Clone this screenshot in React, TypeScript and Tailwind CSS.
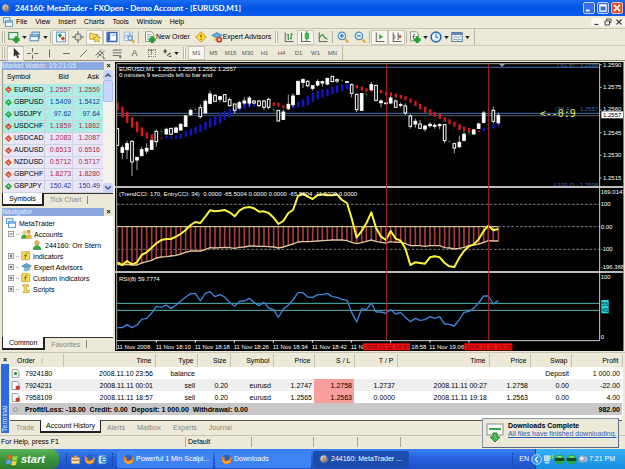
import { ReactNode, useState } from "react";
import { clsx } from "clsx";

type Trend = "up" | "down";

const menuItems = ["File", "View", "Insert", "Charts", "Tools", "Window", "Help"];
const periods = ["M1", "M5", "M15", "M30", "H1", "H4", "D1", "W1", "MN"];

const quotes: { symbol: string; bid: string; ask: string; trend: Trend; major?: boolean; blue?: boolean }[] = [
  { symbol: "EURUSD", bid: "1.2557", ask: "1.2559", trend: "down", major: true },
  { symbol: "GBPUSD", bid: "1.5409", ask: "1.5412", trend: "up", major: true, blue: true },
  { symbol: "USDJPY", bid: "97.62", ask: "97.64", trend: "up", major: true, blue: true },
  { symbol: "USDCHF", bid: "1.1859", ask: "1.1862", trend: "down", major: true },
  { symbol: "USDCAD", bid: "1.2083", ask: "1.2087", trend: "down" },
  { symbol: "AUDUSD", bid: "0.6513", ask: "0.6516", trend: "down" },
  { symbol: "NZDUSD", bid: "0.5712", ask: "0.5717", trend: "down" },
  { symbol: "GBPCHF", bid: "1.8273", ask: "1.8280", trend: "down" },
  { symbol: "GBPJPY", bid: "150.42", ask: "150.49", trend: "up", blue: true },
];

const orderColumns = [
  { title: "Order", width: "w-[53px]" },
  { title: "Time", width: "w-[92px]" },
  { title: "Type", width: "w-[42px]" },
  { title: "Size", width: "w-[33px]" },
  { title: "Symbol", width: "w-[43px]" },
  { title: "Price", width: "w-[41px]" },
  { title: "S / L", width: "w-[40px]" },
  { title: "T / P", width: "w-[43px]" },
  { title: "Time", width: "w-[92px]" },
  { title: "Price", width: "w-[41px]" },
  { title: "Swap", width: "w-[41px]" },
  { title: "Profit", width: "w-[51px]" },
];

const orders = [
  ["7924180", "2008.11.10 23:56", "balance", "", "", "", "", "", "", "", "Deposit", "1 000.00"],
  ["7924231", "2008.11.11 00:01", "sell", "0.20", "eurusd", "1.2747", "1.2758", "1.2737", "2008.11.11 00:27", "1.2758", "0.00", "-22.00"],
  ["7958109", "2008.11.11 18:57", "sell", "0.20", "eurusd", "1.2565", "1.2563", "0.0000", "2008.11.11 19:18", "1.2563", "0.00", "4.00"],
];

const terminalTabs = ["Trade", "Account History", "Alerts", "Mailbox", "Experts", "Journal"];

/* ---------- chart data, one entry per bar ---------- */

// [kind, high, low, body top, body bottom]: w = filled, h = hollow, g = doji
type Candle = [string, number, number, number, number];
const candles: Candle[] = [
  ["h", 205, 257, 205, 257], ["w", 255, 298, 262, 278], ["w", 242, 297, 250, 270], ["h", 240, 348, 243, 307],
  ["w", 291, 330, 291, 301], ["w", 260, 288, 268, 288], ["w", 250, 282, 264, 274], ["w", 241, 269, 241, 269],
  ["h", 208, 260, 213, 246], ["g", 205, 225, 215, 217], ["w", 203, 223, 207, 223], ["h", 204, 224, 204, 224],
  ["w", 200, 218, 203, 218], ["w", 190, 211, 192, 211], ["w", 165, 200, 167, 200], ["w", 146, 168, 150, 164],
  ["g", 141, 156, 148, 150], ["h", 133, 176, 142, 171], ["w", 118, 160, 123, 160], ["w", 92, 133, 101, 131],
  ["h", 103, 125, 105, 125], ["w", 107, 127, 109, 119], ["h", 103, 126, 103, 126], ["h", 113, 140, 118, 138],
  ["h", 131, 160, 131, 152], ["w", 122, 147, 127, 145], ["w", 112, 134, 122, 130], ["w", 108, 138, 113, 130],
  ["h", 120, 132, 122, 130], ["h", 120, 142, 122, 138], ["h", 119, 150, 122, 143], ["h", 113, 148, 117, 143],
  ["g", 142, 160, 149, 151], ["h", 150, 184, 150, 184], ["w", 149, 179, 155, 179], ["w", 104, 150, 132, 146],
  ["w", 100, 140, 107, 135], ["w", 63, 104, 63, 104], ["w", 55, 84, 58, 68], ["h", 60, 82, 63, 78],
  ["w", 76, 92, 76, 86], ["w", 58, 80, 64, 76], ["w", 62, 80, 64, 70], ["w", 54, 76, 54, 73],
  ["h", 48, 66, 48, 66], ["h", 55, 70, 58, 64], ["g", 58, 66, 62, 63], ["w", 64, 68, 64, 68],
  ["h", 70, 112, 73, 101], ["h", 100, 156, 102, 150], ["w", 98, 152, 100, 152], ["g", 96, 118, 103, 105],
  ["w", 66, 92, 73, 90], ["h", 75, 124, 75, 122], ["w", 118, 142, 122, 129], ["w", 126, 134, 128, 132],
  ["w", 108, 133, 113, 130], ["h", 118, 143, 122, 143], ["w", 128, 142, 133, 137], ["h", 130, 165, 137, 160],
  ["h", 163, 206, 167, 200], ["w", 176, 203, 183, 193], ["h", 180, 206, 191, 206], ["w", 195, 215, 197, 208],
  ["w", 187, 203, 192, 198], ["w", 190, 206, 195, 200], ["w", 190, 208, 193, 198], ["h", 193, 250, 193, 243],
  ["g", 238, 250, 244, 245], ["h", 248, 280, 250, 265], ["w", 227, 263, 246, 261], ["w", 215, 244, 222, 242],
  ["g", 214, 228, 219, 220], ["w", 207, 223, 209, 223], ["w", 188, 206, 191, 206], ["w", 153, 190, 158, 188],
  ["g", 180, 180, 180, 180], ["h", 140, 190, 150, 185], ["w", 158, 192, 165, 189],
];

// [top, bottom] of the trend band
const band: [number, number][] = [
  [127, 152], [140, 172], [155, 189], [171, 203], [185, 217], [202, 229], [217, 235], [223, 240], [234, 239], [233, 236],
  [228, 235], [229, 236], [226, 237], [222, 235], [213, 230], [206, 226], [200, 222], [193, 216], [186, 210], [175, 202],
  [166, 196], [158, 190], [153, 181], [147, 172], [138, 158], [133, 152], [130, 148], [128, 143], [128, 140], [125, 137],
  [125, 136], [127, 139], [127, 137], [128, 139], [136, 145], [139, 150], [128, 145], [126, 142], [118, 140], [107, 135],
  [97, 125], [92, 118], [88, 112], [86, 108], [80, 102], [76, 98], [73, 93], [71, 87], [72, 84], [75, 85],
  [80, 92], [85, 95], [87, 95], [88, 96], [90, 100], [95, 106], [97, 108], [101, 112], [105, 116], [109, 121],
  [115, 128], [122, 138], [132, 148], [140, 158], [148, 165], [155, 170], [162, 177], [172, 185], [178, 192], [185, 200],
  [193, 210], [200, 213], [204, 216], [207, 216], [213, 216], [203, 214], [202, 208], [193, 205], [190, 200],
];

const isFalling = (i: number) => i < 10 || (i > 31 && i < 36) || (i > 48 && i < 75);

const entryCci = [
  232, 240, 228, 238, 232, 210, 202, 188, 175, 165, 162, 162, 155, 147, 135, 120, 111, 114, 95, 76,
  79, 77, 75, 82, 94, 77, 68, 66, 70, 80, 79, 84, 98, 117, 108, 84, 75, 33, 26, 35,
  42, 30, 28, 31, 31, 28, 45, 54, 100, 158, 138, 115, 82, 128, 155, 165, 138, 161, 167, 190,
  240, 232, 234, 236, 217, 214, 217, 234, 244, 246, 218, 198, 184, 178, 163, 138, 122, 136, 132,
];

const trendCci = [
  238, 240, 238, 240, 240, 234, 230, 226, 219, 216, 215, 213, 211, 207, 202, 198, 198, 198, 194, 188,
  189, 188, 187, 188, 190, 187, 186, 183, 183, 184, 184, 185, 186, 189, 186, 181, 177, 171, 170, 170,
  169, 168, 167, 166, 165, 165, 165, 167, 172, 176, 173, 169, 165, 169, 172, 174, 170, 172, 171, 176,
  182, 182, 182, 184, 182, 182, 182, 188, 189, 192, 190, 187, 182, 180, 177, 172, 167, 168, 168,
];

const rsi = [
  428, 428, 419, 428, 420, 403, 400, 384, 364, 367, 360, 370, 360, 348, 336, 326, 325, 348, 325, 320,
  335, 329, 336, 352, 364, 349, 348, 340, 352, 362, 352, 369, 374, 397, 372, 360, 345, 323, 323, 336,
  337, 329, 329, 325, 335, 337, 343, 346, 382, 411, 371, 374, 354, 381, 381, 385, 374, 387, 382, 397,
  410, 400, 406, 404, 395, 400, 395, 417, 418, 423, 404, 382, 379, 370, 354, 333, 333, 357, 347,
];

const barX = (i: number) => Math.round(7 + i * 14.65);
const toPoints = (values: number[]) =>
  values.map((y, i) => `${barX(i)},${y + 375}`).join(" ");

const prices: [string, number][] = [
  ["1.2590", 14], ["1.2575", 82], ["1.2560", 148], ["1.2545", 218], ["1.2530", 286], ["1.2515", 354],
];

const indicatorScale: [string, number][] = [
  ["169.0147", 396], ["100", 432], ["0.00", 500], ["-100", 568], ["-196.368", 622], ["100", 652], ["0", 830],
];

const timeLabels: [string, number][] = [
  ["11 Nov 2008", 5], ["11 Nov 18:10", 122], ["11 Nov 18:18", 239], ["11 Nov 18:26", 356],
  ["11 Nov 18:34", 473], ["11 Nov 18:42", 590], ["11 N", 707], ["18:58", 889], ["11 Nov 19:06", 942],
];

const Chart = () => (
  <svg
    viewBox="0 6 1530 870"
    className="block h-auto w-full bg-[#ece9d8] font-['Liberation_Sans',sans-serif] text-[18px]"
    role="img"
    aria-label="EURUSD,M1"
  >
    <defs>
      <clipPath id="screen">
        <rect x="0" y="6" width="1526" height="867" />
      </clipPath>
      <clipPath id="plot">
        <rect x="6" y="12" width="1447" height="832" />
      </clipPath>
    </defs>
    <g clipPath="url(#screen)">
      <rect x="0" y="6" width="1526" height="867" fill="#000" />
      <path d="M5 870V11H1454" fill="none" stroke="#a8a8a8" strokeWidth="3" />

      <g clipPath="url(#plot)">
        <path d="M6 22H1454M6 160H1454" stroke="#4472b8" strokeWidth="3" />
        <path d="M6 167H1454" stroke="#7d8a96" strokeWidth="2" />
        {band.map(([top, bottom], i) => (
          <rect
            key={i}
            x={barX(i) - 3}
            y={top}
            width="7"
            height={bottom - top}
            fill={isFalling(i) ? "#dd1616" : "#1515c8"}
          />
        ))}
        {candles.map(([kind, high, low, top, bottom], i) => {
          const color = kind === "g" ? "#1d6a1d" : "#fff";
          return (
            <g key={i} stroke={color} strokeWidth="3">
              <path d={`M${barX(i)} ${high}V${low}`} strokeWidth="2" />
              {kind === "g" ? (
                <path d={`M${barX(i) - 4} ${top}h8`} />
              ) : (
                <rect
                  x={barX(i) - 4}
                  y={top + 1}
                  width="8"
                  height={bottom - top - 2}
                  fill={kind === "h" ? "#000" : "#fff"}
                />
              )}
            </g>
          );
        })}
        <path d="M1152 12h18l-9 9z" fill="#8fa3b5" />
        <g fill="#3f6fa8" textAnchor="end">
          <text x="1450" y="21">(-61.8) - 1.2588</text>
          <text x="1368" y="154">(76.4)</text>
          <text x="1450" y="154">1.2557</text>
          <text x="1450" y="380">(-100.0) - 1.2508</text>
        </g>
      </g>

      <rect x="0" y="378" width="1526" height="6" fill="#bcbcbc" />
      <g clipPath="url(#plot)">
        <path d="M6 433H1454M6 568H1454M1150 500H1454" stroke="#b9b9b9" strokeWidth="2" strokeDasharray="8 5" />
        {trendCci.map((y, i) => (
          <path key={i} d={`M${barX(i)} 500V${y + 375}`} stroke="#a83c3c" strokeWidth="5" />
        ))}
        <path d="M6 500H1150" stroke="#f5ecb0" strokeWidth="3" />
        <polyline points={toPoints(trendCci)} fill="none" stroke="#e3c49c" strokeWidth="4" />
        <polyline points={toPoints(entryCci)} fill="none" stroke="#fbf43c" strokeWidth="6" strokeLinejoin="round" />
        <path d="M6 730H1454M6 751H1454" stroke="#57b9b4" strokeWidth="3" />
        <polyline points={toPoints(rsi)} fill="none" stroke="#3c86de" strokeWidth="4" strokeLinejoin="round" />
      </g>
      <rect x="0" y="633" width="1526" height="6" fill="#bcbcbc" />
      <path d="M815 12V842M1121 12V842" stroke="#b02626" strokeWidth="3" />
      <path d="M6 842H1454V12" fill="none" stroke="#d0d0d0" strokeWidth="3" />
      <path
        d="M124 842v6M241 842v6M358 842v6M475 842v6M592 842v6M709 842v6M827 842v6M945 842v6M1062 842v6"
        stroke="#fff"
        strokeWidth="3"
      />

      <g fill="#fff">
        <text x="12" y="32">EURUSD,M1&nbsp; 1.2552 1.2558 1.2552 1.2557</text>
        <text x="12" y="52">0 minutes 9 seconds left to bar end</text>
        <text x="12" y="408">(TrendCCI: 170, EntryCCI: 34)&nbsp; 0.0000 -65.5004 0.0000 0.0000 -65.5004 -11.5029 0.0000</text>
        <text x="12" y="662">RSI(8) 59.7774</text>
        {prices.map(([label, y]) => (
          <text key={label} x="1464" y={y + 6}>{label}</text>
        ))}
        {indicatorScale.map(([label, y]) => (
          <text key={y} x="1457" y={y + 6}>{label}</text>
        ))}
        {timeLabels.map(([label, x]) => (
          <text key={label} x={x} y="866">{label}</text>
        ))}
      </g>
      <path
        d="M1454 14h6M1454 82h6M1454 150h6M1454 218h6M1454 286h6M1454 354h6"
        stroke="#fff"
        strokeWidth="2"
      />
      <rect x="1459" y="154" width="65" height="21" fill="#fff" />
      <text x="1464" y="171" fill="#000">1.2557</text>
      <rect x="1459" y="720" width="22" height="40" fill="#22d3dc" />
      <text x="1460" y="738" fill="#04343a">55</text>
      <text x="1460" y="757" fill="#04343a">45</text>
      <rect x="744" y="850" width="141" height="21" fill="#f01212" />
      <text x="747" y="866" fill="#600">2008.11.11 18:57</text>
      <rect x="1048" y="850" width="144" height="21" fill="#f01212" />
      <text x="1053" y="866" fill="#600">2008.11.11 19:18</text>
      <text x="1274" y="172" className="font-['DejaVu_Sans_Mono',monospace] text-[30px]" fill="#e6e65a">&lt;--0:9</text>
    </g>
  </svg>
);

/* ---------- icons ---------- */

type IconProps = { children: ReactNode; className?: string };

const Icon = ({ children, className = "size-3" }: IconProps) => (
  <svg viewBox="0 0 16 16" className={clsx("shrink-0", className)} fill="none" aria-hidden="true">
    {children}
  </svg>
);

const FirefoxIcon = ({ className = "size-[11px]" }: { className?: string }) => (
  <Icon className={className}>
    <circle cx="8" cy="8" r="7" fill="#2b5fc4" />
    <path d="M1 5c0 6 3 10 7 10s7.500-3 7.500-7.500c0-2-1-4-2-5 .5 3-1 7-5 7S4 7 6.500 5.500C5 5 3 5 1 2z" fill="#ee8420" />
    <path d="M2 9c2 4 8 5 11 1" stroke="#ffc545" strokeWidth="1.500" />
  </Icon>
);

const MetaIcon = ({ className = "size-[10px]" }: { className?: string }) => (
  <Icon className={className}>
    <circle cx="8" cy="8" r="7" fill="#5d6f96" />
    <circle cx="7" cy="7" r="4.500" fill="#b9c3d8" />
    <path d="M5 9l3-5 3 5-3 3z" fill="#e07a35" />
  </Icon>
);

const Plus = () => <path d="M11 7v9M6.500 11.500h9" stroke="#1fa02c" strokeWidth="4" />;

const NewChartIcon = () => (
  <Icon>
    <rect x="1" y="2" width="12" height="9" fill="#e4f4e4" stroke="#3f8f5a" strokeWidth="1.500" />
    <Plus />
  </Icon>
);

const ProfilesIcon = () => (
  <Icon>
    <rect x="4" y="1.500" width="10" height="8" fill="#cfe3f6" stroke="#5f8fc4" strokeWidth="1.500" />
    <rect x="1.500" y="5" width="11" height="8" fill="#eef6fd" stroke="#5f8fc4" strokeWidth="1.500" />
    <path d="M2 7h10" stroke="#5f8fc4" strokeWidth="2" />
  </Icon>
);

const MarketWatchIcon = () => (
  <Icon>
    <rect x="2" y="1.500" width="12" height="13" fill="#f7fbff" stroke="#6fa0cc" strokeWidth="1.500" />
    <path d="M3.500 6L6.500 3l3 3-3 3z" fill="#27a03c" />
    <path d="M7.500 10l3-3 3 3-3 3z" fill="#d8452c" />
  </Icon>
);

const TargetIcon = () => (
  <Icon>
    <circle cx="8" cy="8" r="4.500" stroke="#666" strokeWidth="1.300" />
    <path d="M8 0v6M8 10v6M0 8h6M10 8h6" stroke="#666" strokeWidth="1.300" />
  </Icon>
);

const NavigatorIcon = () => (
  <Icon>
    <path d="M1 3h4l1 1.500h6V11H1z" fill="#f7dc6a" stroke="#b48d20" />
    <path d="M10.500 5l1.600 3.300 3.400.4-2.500 2.400.6 3.500-3.100-1.700-3.100 1.700.6-3.500L5.500 8.700l3.400-.4z" fill="#ffe24d" stroke="#b48d20" />
  </Icon>
);

const TerminalIcon = () => (
  <Icon>
    <rect x="1.500" y="2" width="13" height="12" fill="#fff" stroke="#3568b4" strokeWidth="2" />
    <path d="M4 3v10" stroke="#3568b4" strokeWidth="3" />
    <path d="M7 5.500h6" stroke="#a9c5ea" strokeWidth="2" />
  </Icon>
);

const TesterIcon = () => (
  <Icon>
    <rect x="1.500" y="1.500" width="11" height="11" fill="#e9f1f9" stroke="#8eabc6" />
    <path d="M3 9l2-4 2 3 2-5 2 4" stroke="#6a8fb4" />
    <circle cx="9.500" cy="9.500" r="3" fill="#cfe6fa" stroke="#4a7fb5" strokeWidth="1.300" />
    <path d="M12 12l3 3" stroke="#d9a520" strokeWidth="2.500" />
  </Icon>
);

const NewOrderIcon = () => (
  <Icon>
    <path d="M2 1h8l3 3v10H2z" fill="#fff" stroke="#5c7f62" />
    <path d="M4 5h6M4 8h6M4 11h4" stroke="#5c7f62" />
    <Plus />
  </Icon>
);

const MetaEditorIcon = () => (
  <Icon>
    <path d="M8 1l7 7-7 7-7-7z" fill="#ffd83a" stroke="#b3860c" />
    <path d="M8 4.500v4.500M8 10.500v1.500" stroke="#8a5b00" strokeWidth="1.800" />
  </Icon>
);

const ExpertIcon = () => (
  <Icon>
    <path d="M1 6l7-4 7 4-7 3z" fill="#5fb2dd" stroke="#2e7cae" />
    <path d="M4 8v4c2 2.500 6 2.500 8 0V8l-4 2z" fill="#f0c55a" />
    <circle cx="11" cy="11.500" r="4" fill="#d93420" />
    <rect x="9.500" y="10" width="3" height="3" fill="#fff" />
  </Icon>
);

const BarsIcon = () => (
  <Icon>
    <path d="M3 2v12h11" stroke="#666" strokeWidth="1.400" />
    <path d="M7 4v8M7 5h-2M11 3v8M11 4h2M11 10h-2" stroke="#2c8c3c" strokeWidth="1.500" />
  </Icon>
);

const CandlesIcon = () => (
  <Icon>
    <path d="M2 2v12h12" stroke="#666" strokeWidth="1.400" />
    <path d="M9 0v13" stroke="#1f8a2f" strokeWidth="1.400" />
    <rect x="7" y="3" width="4.500" height="7" rx="1" fill="#39c34d" stroke="#1f8a2f" />
  </Icon>
);

const LineChartIcon = () => (
  <Icon>
    <path d="M3 2v12h11" stroke="#666" strokeWidth="1.400" />
    <path d="M3 10c3-6 5-6 6-3s3 3 5 4" stroke="#2c8c3c" strokeWidth="1.500" />
  </Icon>
);

const ZoomIcon = ({ out }: { out?: boolean }) => (
  <Icon>
    <path d="M10 10l5 5" stroke="#dcae2e" strokeWidth="3" />
    <circle cx="6.500" cy="6.500" r="5" fill="#d8ecfb" stroke="#4f8fc6" strokeWidth="1.600" />
    <path d={out ? "M4 6.500h5" : "M4 6.500h5M6.500 4v5"} stroke="#2f72b0" strokeWidth="1.600" />
  </Icon>
);

const AutoScrollIcon = () => (
  <Icon>
    <path d="M3 2v12h11" stroke="#666" strokeWidth="1.400" />
    <path d="M7 4l5 3.500L7 11z" fill="#2fa53f" />
  </Icon>
);

const ShiftIcon = () => (
  <Icon>
    <path d="M3 2v12h11M9.500 2v10" stroke="#666" strokeWidth="1.400" />
    <path d="M14 7.500h-4M12 5v5" stroke="#c2452f" strokeWidth="1.500" />
    <path d="M5 5v6" stroke="#666" />
  </Icon>
);

const IndicatorsIcon = () => (
  <Icon>
    <path d="M2 1h8l2 2v10H2z" fill="#fff" stroke="#6d7d6d" />
    <path d="M8 4c-3 0-2 3-2 7M4.500 7h4" stroke="#444" />
    <Plus />
  </Icon>
);

const ClockIcon = () => (
  <Icon>
    <circle cx="8" cy="8" r="6.500" fill="#eaf4fd" stroke="#2d6fb8" strokeWidth="2.200" />
    <path d="M8 4v4.500h3" stroke="#2d5f94" strokeWidth="1.300" />
  </Icon>
);

const TemplateIcon = () => (
  <Icon>
    <rect x="1" y="2" width="14" height="12" fill="#f2f7fb" stroke="#587da6" strokeWidth="1.300" />
    <path d="M1 4h14" stroke="#587da6" strokeWidth="2.500" />
    <path d="M3 9l3-2 3 2 4-2M3 12l3-1 3 1 4-1" stroke="#55789b" />
  </Icon>
);

const CursorIcon = () => (
  <Icon>
    <path d="M5 1v12l3-2.500 2 4.500 2-1-2-4h4z" fill="#333" />
  </Icon>
);

const drawingTools: { name: string; path: string }[] = [
  { name: "Crosshair", path: "M8 0v6M8 10v6M0 8h6M10 8h6" },
  { name: "Vertical line", path: "M8 2v12" },
  { name: "Horizontal line", path: "M3 8h10" },
  { name: "Trendline", path: "M3 13L13 3" },
  { name: "Channel", path: "M1 11L10 2M3 14L14 4M3 7l7 5M7 4l6 6M12 11v4h3" },
  { name: "Fibonacci", path: "M1 3h13M1 7h13M1 11h10M12 10v5M10 13h4" },
];

const Caret = () => (
  <svg viewBox="0 0 6 4" className="h-[3px] w-[5px] shrink-0" aria-hidden="true">
    <path d="M0 0h6L3 4z" fill="#222" />
  </svg>
);

const Divider = () => <span className="mx-px h-3 w-px shrink-0 bg-[#b8b5a2]" />;
const Grip = () => <span className="mx-[2px] h-3 w-[3px] shrink-0 border-x border-[#b9b6a4] bg-white" />;

type ToolProps = { label: string; children: ReactNode; pressed?: boolean; wide?: boolean };

const Tool = ({ label, children, pressed, wide }: ToolProps) => (
  <button
    type="button"
    aria-label={label}
    className={clsx(
      "flex h-[15px] shrink-0 items-center justify-center gap-[2px]",
      wide ? "w-[21px]" : "w-[17px]",
      pressed && "border border-[#c9c6b6] bg-[#f8f7f1]"
    )}
  >
    {children}
  </button>
);

const Toolbars = () => {
  const [period, setPeriod] = useState("M1");

  return (
    <div className="shrink-0">
      <div className="flex h-[17px] items-center border-t border-[#c9c6b4]">
        <div className="flex h-full items-center border-r border-[#b8b5a2] pr-[3px]">
          <Grip />
          <Tool label="New chart" wide><NewChartIcon /><Caret /></Tool>
          <Tool label="Profiles" wide><ProfilesIcon /><Caret /></Tool>
          <Divider />
          <Tool label="Market watch" pressed><MarketWatchIcon /></Tool>
          <Tool label="Data window"><TargetIcon /></Tool>
          <Tool label="Navigator" pressed><NavigatorIcon /></Tool>
          <Tool label="Terminal" pressed><TerminalIcon /></Tool>
          <Tool label="Strategy tester"><TesterIcon /></Tool>
          <Divider />
          <button type="button" className="ml-1 flex w-12 items-center whitespace-nowrap"><NewOrderIcon />New Order</button>
          <Tool label="MetaEditor"><MetaEditorIcon /></Tool>
          <button type="button" className="flex w-16 items-center justify-center whitespace-nowrap"><ExpertIcon />Expert Advisors</button>
          <Grip />
          <Tool label="Bar chart"><BarsIcon /></Tool>
          <Tool label="Candlesticks" pressed><CandlesIcon /></Tool>
          <Tool label="Line chart"><LineChartIcon /></Tool>
          <Divider />
          <Tool label="Zoom in"><ZoomIcon /></Tool>
          <Tool label="Zoom out"><ZoomIcon out /></Tool>
          <Divider />
          <Tool label="Auto scroll" pressed><AutoScrollIcon /></Tool>
          <Tool label="Chart shift" pressed><ShiftIcon /></Tool>
          <Divider />
          <Tool label="Indicators" wide><IndicatorsIcon /><Caret /></Tool>
          <Tool label="Periods" wide><ClockIcon /><Caret /></Tool>
          <Tool label="Templates" wide><TemplateIcon /><Caret /></Tool>
        </div>
      </div>
      <div className="flex h-4 items-center border-t border-b border-t-[#d0cdbc] border-b-[#8c8a7c] text-[#555]">
        <div className="flex h-full items-center border-r border-[#b8b5a2] pr-px">
          <Grip />
          <Tool label="Cursor" pressed><CursorIcon /></Tool>
          {drawingTools.map(({ name, path }) => (
            <Tool key={name} label={name}>
              <Icon className="size-[11px]"><path d={path} stroke="#666" strokeWidth="1.400" /></Icon>
            </Tool>
          ))}
          <Tool label="Text"><span className="text-[9px]">A</span></Tool>
          <Tool label="Text label">
            <span className="flex size-2 items-center justify-center border border-dotted border-[#777] text-[7px]">T</span>
          </Tool>
          <Tool label="Arrows" wide>
            <Icon className="size-[10px]">
              <path d="M2 5l3-4 3 4-3 4z" fill="#555" />
              <path d="M8 12l6-4M11 14l4-1" stroke="#555" strokeWidth="2" />
            </Icon>
            <Caret />
          </Tool>
          <Grip />
          {periods.map((item) => (
            <button
              key={item}
              type="button"
              onClick={() => setPeriod(item)}
              className={clsx(
                "h-[14px] w-[17px] text-center text-[6px]",
                item === period && "border border-[#c9c6b6] bg-[#f8f7f1]"
              )}
            >
              {item}
            </button>
          ))}
        </div>
      </div>
    </div>
  );
};

const PanelTitle = ({ children }: { children: ReactNode }) => (
  <div className="flex h-2 items-center text-[7px] leading-[8px]">
    <span className="flex-1 bg-[#8ba9e0] text-[#e6edfa]">{children}</span>
    <button type="button" aria-label="Close" className="w-[9px] text-center font-bold">×</button>
  </div>
);

const PanelTabs = ({ tabs }: { tabs: [string, string] }) => (
  <div className="flex h-[13px] items-stretch border-t border-[#333] leading-[11px]">
    <button type="button" className="-mt-px border-r-2 border-b-2 border-l border-[#222] bg-white px-[6px]">{tabs[0]}</button>
    <button type="button" className="px-[6px] text-[#8a887c]">{tabs[1]}</button>
    <span className="my-[2px] w-px bg-[#8a887c]" />
  </div>
);

const Arrow = ({ trend }: { trend: Trend }) => (
  <Icon className="size-[7px]">
    <path d="M8 0l8 8-8 8-8-8z" fill={trend === "up" ? "#22a83a" : "#d4502c"} />
    <path d={trend === "up" ? "M8 4l4 5H4z" : "M8 12l4-5H4z"} fill="#fff" opacity=".5" />
  </Icon>
);

const MarketWatch = () => (
  <section>
    <PanelTitle>Market Watch: 19:21:05</PanelTitle>
    <div className="flex border-l border-[#9a988a] bg-white">
      <table className="flex-1 table-fixed border-collapse">
        <thead>
          <tr className="h-[14px] bg-[#ece9d8]">
            <th className="w-10 pl-1 text-left font-normal">Symbol</th>
            <th className="w-[28px] pr-1 text-right font-normal">Bid</th>
            <th className="w-[30px] pr-1 text-right font-normal">Ask</th>
          </tr>
        </thead>
        <tbody>
          {quotes.map(({ symbol, bid, ask, trend, major, blue }) => (
            <tr key={symbol} className={clsx("h-3 border-b border-[#cfd3dd] leading-[8px]", major ? "bg-[#a9efe6]" : "bg-[#e9e6f9]")}>
              <td className="border-r border-[#cfd3dd] pl-[2px]">
                <span className="flex items-center gap-[2px]"><Arrow trend={trend} />{symbol}</span>
              </td>
              <td className={clsx("border-r border-[#cfd3dd] pr-px text-right", blue ? "text-[#1838a8]" : "text-[#b02840]")}>{bid}</td>
              <td className={clsx("pr-[3px] text-right", blue ? "text-[#1838a8]" : "text-[#b02840]")}>{ask}</td>
            </tr>
          ))}
        </tbody>
      </table>
      <div className="flex w-[10px] flex-col items-center bg-[#f2f1ea]">
        <span className="flex h-[10px] w-full items-center justify-center rounded-xs bg-[#c6d5fb]">
          <svg viewBox="0 0 6 4" className="h-1 w-[6px]"><path d="M0 4l3-3 3 3" fill="none" stroke="#4d6185" strokeWidth="1.500" /></svg>
        </span>
        <span className="h-[22px] w-full rounded-xs border border-[#a9bdf0] bg-[#c6d5fb]" />
        <span className="flex-1" />
        <span className="flex h-[10px] w-full items-center justify-center rounded-xs bg-[#c6d5fb]">
          <svg viewBox="0 0 6 4" className="h-1 w-[6px]"><path d="M0 0l3 3 3-3" fill="none" stroke="#4d6185" strokeWidth="1.500" /></svg>
        </span>
      </div>
    </div>
    <PanelTabs tabs={["Symbols", "Tick Chart"]} />
  </section>
);

const FunctionIcon = () => (
  <Icon className="size-[10px]">
    <rect x="1" y="1" width="13" height="13" rx="1" fill="#f8d95c" stroke="#b58e22" />
    <path d="M10 4c-3-1-2 3-3.500 8M5 7.500h4" stroke="#6b4e00" strokeWidth="1.300" />
  </Icon>
);

const WindowsIcon = () => (
  <Icon className="size-[10px]">
    <rect x="1" y="1" width="10" height="8" fill="#e4f2fc" stroke="#4d94cf" strokeWidth="1.500" />
    <rect x="4" y="6" width="11" height="9" fill="#fff" stroke="#4d94cf" strokeWidth="1.500" />
    <path d="M4 8h11" stroke="#4d94cf" strokeWidth="2" />
  </Icon>
);

const PersonIcon = () => (
  <Icon className="size-[10px]">
    <circle cx="8" cy="4.500" r="3.500" fill="#e9bd6a" stroke="#a57722" />
    <path d="M2 15c0-8 12-8 12 0z" fill="#36ad3c" stroke="#1c7a26" />
  </Icon>
);

const AccountsIcon = () => (
  <Icon className="size-[11px]">
    <circle cx="5" cy="5" r="3" fill="#f2cd6a" />
    <circle cx="11" cy="4" r="3" fill="#d8a23a" />
    <path d="M0 14c0-8 10-8 10 0z" fill="#3fae44" />
    <path d="M7 14c0-9 9-9 9 0z" fill="#e2b63f" />
  </Icon>
);

const ScriptIcon = () => (
  <Icon className="size-[10px]">
    <path d="M3 1h9v3H9v6h5l-2 4H3l2-4V4H3z" fill="#f8d95c" stroke="#b58e22" />
  </Icon>
);

const HatIcon = () => (
  <Icon className="size-[11px]">
    <path d="M1 6l7-4 7 4-7 3z" fill="#5fa8d5" stroke="#2e7cae" />
    <path d="M4 8v4c2 2 6 2 8 0V8l-4 2z" fill="#77b7d8" />
    <path d="M13 7v5" stroke="#d3a12a" strokeWidth="1.500" />
  </Icon>
);

const tree: { label: string; icon: ReactNode }[] = [
  { label: "Indicators", icon: <FunctionIcon /> },
  { label: "Expert Advisors", icon: <HatIcon /> },
  { label: "Custom Indicators", icon: <FunctionIcon /> },
  { label: "Scripts", icon: <ScriptIcon /> },
];

const Expander = ({ open }: { open?: boolean }) => (
  <>
    <Icon className="size-[6px]">
      <rect x="1" y="1" width="14" height="14" fill="#fff" stroke="#888" strokeWidth="2" />
      <path d={open ? "M4 8h8" : "M4 8h8M8 4v8"} stroke="#222" strokeWidth="2" />
    </Icon>
    <span className="w-[3px] border-t border-dotted border-[#aaa]" />
  </>
);

const Navigator = () => (
  <section className="mt-[2px] flex flex-1 flex-col">
    <PanelTitle>Navigator</PanelTitle>
    <ul className="flex-1 border-l border-[#9a988a] bg-white pt-[2px] leading-[11px]">
      <li className="flex h-[11px] items-center gap-[3px] pl-[3px]"><WindowsIcon />MetaTrader</li>
      <li className="flex h-[11px] items-center gap-[2px] pl-[5px]"><Expander open /><AccountsIcon />Accounts</li>
      <li className="flex h-[11px] items-center gap-[3px] pl-[29px]"><PersonIcon />244160: Orr Stern</li>
      {tree.map(({ label, icon }) => (
        <li key={label} className="flex h-[11px] items-center gap-[2px] pl-[5px]">
          <Expander />{icon}{label}
        </li>
      ))}
    </ul>
    <PanelTabs tabs={["Common", "Favorites"]} />
  </section>
);

const OrderIcon = ({ balance }: { balance: boolean }) => (
  <Icon className="size-[9px]">
    <path d="M2 1h9l3 3v11H2z" fill="#fff" stroke="#777" strokeWidth="1.300" />
    {balance ? <circle cx="8" cy="8" r="3" fill="#2c9a3b" /> : <circle cx="12" cy="12" r="4" fill="#cf3a22" />}
  </Icon>
);

const Terminal = () => {
  const [tab, setTab] = useState("Account History");

  return (
    <section className="flex shrink-0 border-t border-[#c9c6b4] pt-px pr-[3px]">
      <div className="flex w-[10px] flex-col items-center">
        <button type="button" aria-label="Close terminal" className="h-[10px] leading-[9px] font-bold">×</button>
        <div className="flex w-2 flex-1 rotate-180 items-start bg-[#2f6be0] pt-px text-[7px] leading-[8px] text-[#dce8ff] [writing-mode:vertical-rl]">
          Terminal
        </div>
      </div>
      <div className="min-w-0 flex-1">
        <table className="w-full table-fixed border-collapse bg-white">
          <thead>
            <tr className="h-[13px] bg-[#ece9d8]">
              {orderColumns.map(({ title, width }, i) => (
                <th key={i} className={clsx(width, "border-r border-[#c4c1af] pr-[3px] text-right font-normal", i === 0 && "pl-[7px] !text-left")}>
                  {title}{i === 0 && <span className="ml-[6px] text-[#999]">/</span>}
                </th>
              ))}
            </tr>
          </thead>
          <tbody>
            {orders.map((row, rowIndex) => (
              <tr key={row[0]} className={clsx("h-3 leading-[9px]", rowIndex === 1 && "bg-[#efefef]")}>
                {row.map((cell, i) => (
                  <td
                    key={i}
                    className={clsx(
                      "pr-[2px] whitespace-nowrap",
                      i > 0 && "text-right",
                      i === 6 && cell && "bg-[#fa9d9d]"
                    )}
                  >
                    {i === 0 ? (
                      <span className="flex items-center gap-[5px] pl-px"><OrderIcon balance={rowIndex === 0} />{cell}</span>
                    ) : cell}
                  </td>
                ))}
              </tr>
            ))}
          </tbody>
          <tfoot>
            <tr className="h-3 bg-[#c8c8c8] leading-[9px] font-bold">
              <td colSpan={11}>
                <span className="flex items-center gap-[5px] pl-px">
                  <Icon className="size-[9px]"><circle cx="8" cy="8" r="3.500" stroke="#888" strokeWidth="1.500" /></Icon>
                  Profit/Loss: -18.00&nbsp; Credit: 0.00&nbsp; Deposit: 1 000.00&nbsp; Withdrawal: 0.00
                </span>
              </td>
              <td className="pr-[2px] text-right">982.00</td>
            </tr>
          </tfoot>
        </table>
        <div className="h-[5px] bg-white" />
        <div className="flex h-[13px] items-stretch border-t border-[#555] leading-[11px]">
          {terminalTabs.map((item) => (
            <button
              key={item}
              type="button"
              onClick={() => setTab(item)}
              className={clsx(
                item === tab
                  ? "-mt-px border-x border-b-2 border-[#222] bg-white px-[5px]"
                  : "px-[6px] text-[#8a887c]"
              )}
            >
              {item}
            </button>
          ))}
        </div>
      </div>
    </section>
  );
};

const StatusBar = () => (
  <div className="mt-[2px] flex h-[13px] shrink-0 items-center border-t border-[#c9c6b4] leading-[10px]">
    <span className="w-[185px] pl-px">For Help, press F1</span>
    <span className="w-[66px] border-l border-[#aaa796] pl-[2px]">Default</span>
    <span className="h-[10px] w-[62px] border-l border-[#aaa796]" />
    <span className="h-[10px] w-[44px] border-l border-[#aaa796]" />
    <span className="h-[10px] w-[43px] border-l border-[#aaa796]" />
    <span className="h-[10px] flex-1 border-l border-[#aaa796]" />
  </div>
);

const TaskButton = ({ icon, label, active }: { icon: ReactNode; label: string; active?: boolean }) => (
  <button
    type="button"
    className={clsx(
      "flex h-[17px] w-24 min-w-0 items-center gap-[2px] rounded-xs pl-[6px] whitespace-nowrap text-white",
      active ? "bg-[#1c4cae]" : "bg-[#3f83f2]"
    )}
  >
    {icon}
    {label}
  </button>
);

const TaskGrip = () => <span className="h-3 w-px border-l border-dotted border-[#123c94]" />;

const Taskbar = () => (
  <footer className="mt-px flex h-5 shrink-0 items-center bg-linear-to-b from-[#3a80f0] via-[#2560dc] to-[#1d50c4]">
    <button
      type="button"
      className="flex h-full w-[59px] items-center gap-[2px] rounded-r-lg bg-linear-to-b from-[#5bb55a] via-[#3a943a] to-[#2f7d2f] pl-[6px] text-[11px] font-bold text-white italic"
    >
      <Icon className="size-[13px]">
        <path d="M2 3c2-1.500 4-1 5.500 0L6.500 8C5 7 3 7 1 8z" fill="#f0592b" />
        <path d="M8.500 3.500c2 1 4 1 6 0L13.500 8.500c-2 1-4 1-6 0z" fill="#8fdc3f" />
        <path d="M.8 9c2-1 4-1 5.500 0l-1 5c-2-1-4-1-5.500 0z" fill="#5aa0f5" />
        <path d="M7.300 9.500c2 1 4 1 6 0l-1 5c-2 1-4 1-6 0z" fill="#fbd23c" />
      </Icon>
      start
    </button>
    <div className="flex items-center gap-[3px] pr-1 pl-[7px]">
      <TaskGrip />
      <Icon className="size-[11px]">
        <rect x="2" y="5" width="12" height="9" rx="1" fill="#f6e5b4" stroke="#b9852b" />
        <path d="M4 5l4-4 4 4z" fill="#ef8a35" />
        <path d="M3 9h10" stroke="#d76c2c" strokeWidth="2" />
      </Icon>
      <FirefoxIcon />
      <Icon className="size-[11px]">
        <rect x="1" y="2" width="11" height="12" rx="2" fill="#cfe5fb" stroke="#5b9fe0" />
        <circle cx="9" cy="8" r="4" stroke="#3584d0" strokeWidth="2" />
        <path d="M5 8h8" stroke="#3584d0" strokeWidth="1.500" />
      </Icon>
      <TaskGrip />
    </div>
    <div className="flex min-w-0 flex-1 gap-[2px]">
      <TaskButton icon={<FirefoxIcon />} label="Powerful 1 Min Scalpi..." />
      <TaskButton icon={<FirefoxIcon />} label="Downloads" />
      <TaskButton icon={<MetaIcon />} label="244160: MetaTrader ..." active />
    </div>
    <TaskGrip />
    <span className="px-[6px] text-white">EN</span>
    <div className="flex h-full w-[90px] items-center gap-px border-l border-[#1348a8] bg-linear-to-b from-[#35b0f5] to-[#128de0] text-white">
      <Icon className="-ml-[5px] size-[11px]">
        <circle cx="8" cy="8" r="7" fill="#2f8df0" stroke="#d6ecff" strokeWidth="1.300" />
        <path d="M10 4L6 8l4 4" stroke="#fff" strokeWidth="2" />
      </Icon>
      <Icon className="size-[10px]">
        <rect x="2" y="3" width="8" height="8" fill="#b8d8f2" stroke="#e9f5ff" />
        <path d="M3 14h7" stroke="#dcecfa" strokeWidth="2" />
        <path d="M12 2v6M15 1v7" stroke="#7df07a" strokeWidth="1.500" />
      </Icon>
      {[0, 1].map((item) => (
        <Icon key={item} className="size-[11px]">
          <circle cx="8" cy="8" r="7" fill="#2ea83c" />
          <path d="M1 6h14v4H1z" fill="#15431b" />
          <path d="M3 5c2-3 8-3 10 0z" fill="#7fe783" />
        </Icon>
      ))}
      <Icon className="size-[10px]">
        <circle cx="7" cy="8" r="6" fill="#9aa7b5" />
        <circle cx="6" cy="7" r="3" fill="#e3e8ee" />
        <path d="M12 4c3 2 3 6 0 9" stroke="#dbe7f3" strokeWidth="1.500" />
      </Icon>
      <span className="ml-auto pr-[10px] whitespace-nowrap">7:21 PM</span>
    </div>
  </footer>
);

const DownloadNotice = () => (
  <aside className="absolute right-[6px] bottom-[21px] flex h-[30px] w-[137px] items-center gap-1 border border-t-[#8a97a8] border-r-[#5d6b80] border-b-[#5d6b80] border-l-[#8a97a8] bg-[#ece9d8] pl-[3px]">
    <svg viewBox="0 0 18 20" className="h-5 w-[18px] shrink-0" aria-hidden="true">
      <rect x="1" y="1" width="16" height="11" fill="#fdfdfd" stroke="#8c8c8c" />
      <path d="M3 6h12" stroke="#3fa54b" strokeWidth="2" />
      <path d="M7 10h4v4h3l-5 5-5-5h3z" fill="#4fbf55" stroke="#27823a" />
    </svg>
    <div className="self-start pt-[3px] leading-[8px] whitespace-nowrap">
      <p className="font-bold">Downloads Complete</p>
      <a href="#downloads" className="text-[#2f5fb8] underline">All files have finished downloading.</a>
    </div>
  </aside>
);

const TitleBar = () => (
  <header className="flex h-4 shrink-0 items-center gap-1 bg-linear-to-b from-[#1a6cf0] via-[#0054e3] to-[#0a5cf0] pr-[2px] pl-px">
    <MetaIcon />
    <h1 className="flex-1 font-[Lato,sans-serif] text-[8px] font-bold text-white">
      244160: MetaTrader - FXOpen - Demo Account - [EURUSD,M1]
    </h1>
    <div className="flex gap-[2px]">
      <button type="button" aria-label="Minimize" className="size-3 rounded-xs border border-[#bcd0f8] bg-[#3a6ee4]">
        <Icon className="size-[10px]"><path d="M3 12h6" stroke="#fff" strokeWidth="3" /></Icon>
      </button>
      <button type="button" aria-label="Maximize" className="size-3 rounded-xs border border-[#bcd0f8] bg-[#3a6ee4]">
        <Icon className="size-[10px]"><path d="M3 3h10v10H3zM3 4.500h10" stroke="#fff" strokeWidth="2" /></Icon>
      </button>
      <button type="button" aria-label="Close" className="size-3 rounded-xs border border-[#f0c0b0] bg-[#dd4f2c]">
        <Icon className="size-[10px]"><path d="M3 3l10 10M13 3L3 13" stroke="#fff" strokeWidth="2.500" /></Icon>
      </button>
    </div>
  </header>
);

const MenuBar = () => (
  <nav className="flex h-3 shrink-0 items-center gap-[3px] pl-[3px]">
    <WindowsIcon />
    <div className="flex flex-1 gap-2">
      {menuItems.map((item) => (
        <button key={item} type="button">{item}</button>
      ))}
    </div>
    <div className="flex items-center gap-[3px] bg-[#f8f7f1] px-[2px]">
      <Icon className="size-2"><path d="M3 13h8" stroke="#444" strokeWidth="2.500" /></Icon>
      <Icon className="size-2"><path d="M5 5V2h9v7h-3M2 6h9v8H2z" stroke="#444" strokeWidth="2" /></Icon>
      <Icon className="size-2"><path d="M3 3l10 10M13 3L3 13" stroke="#444" strokeWidth="2.500" /></Icon>
    </div>
  </nav>
);

export default function App() {
  return (
    <div className="relative flex min-h-screen flex-col overflow-hidden bg-[#ece9d8] font-['Liberation_Sans',Arial,sans-serif] text-[7px] leading-[10px] text-black">
      <TitleBar />
      <MenuBar />
      <Toolbars />
      <main className="flex flex-1 items-stretch pt-px">
        <div className="flex w-[115px] shrink-0 flex-col pr-[2px] pb-[2px] pl-[2px]">
          <MarketWatch />
          <Navigator />
        </div>
        <div className="min-w-0 flex-1">
          <Chart />
        </div>
      </main>
      <Terminal />
      <StatusBar />
      <Taskbar />
      <DownloadNotice />
    </div>
  );
}
